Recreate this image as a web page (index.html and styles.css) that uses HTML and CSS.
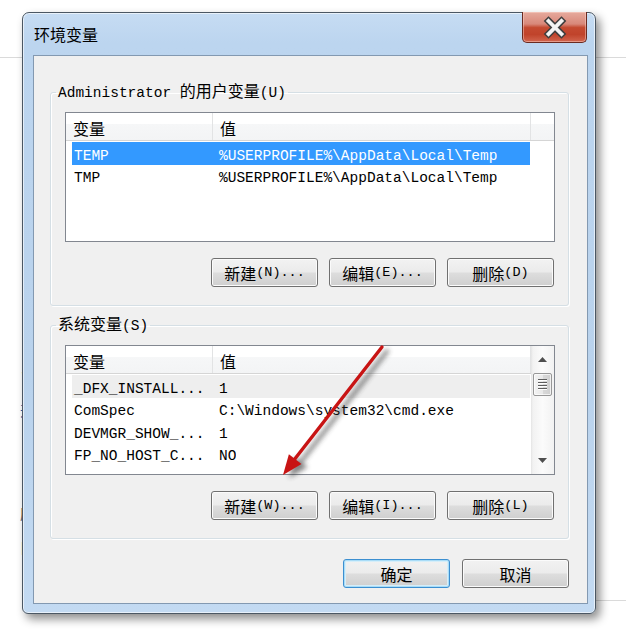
FILE: index.html
```html
<!DOCTYPE html>
<html lang="zh-CN">
<head>
<meta charset="utf-8">
<title>环境变量</title>
<link rel="stylesheet" href="styles.css">
</head>
<body>
<div class="desk">
  <div class="frag">
    <div class="f1">W</div>
    <div class="f2">开</div>
    <div class="f3">.</div>
    <div class="f4">历</div>
    <div class="f5">目</div>
  </div>

  <section class="window">
    <header class="titlebar">
      <span class="title">环境变量</span>
      <div class="close">
        <svg width="65" height="31" viewBox="0 0 65 31">
          <path d="M26.5 9 L39.5 22 M39.5 9 L26.5 22" stroke="#3f3f3f" stroke-width="6.8" stroke-linecap="square"/>
          <path d="M26.5 9 L39.5 22 M39.5 9 L26.5 22" stroke="#f4f4f4" stroke-width="3.8" stroke-linecap="square"/>
        </svg>
      </div>
    </header>
    <div class="frame">
      <div class="client">
        <fieldset class="group g1">
          <legend>Administrator <span class="cj">的用户变量</span>(U)</legend>
          <div class="gbody">
            <div class="list">
              <div class="lmain">
                <div class="lhead">
                  <div class="h1"><span class="cj">变量</span></div>
                  <div class="h2"><span class="cj">值</span></div>
                  <div class="hfill"></div>
                </div>
                <div class="rows">
                  <div class="row sel"><span class="c1">TEMP</span><span class="c2">%USERPROFILE%\AppData\Local\Temp</span></div>
                  <div class="row"><span class="c1">TMP</span><span class="c2">%USERPROFILE%\AppData\Local\Temp</span></div>
                </div>
              </div>
            </div>
            <div class="btns">
              <button class="btn"><span class="cj">新建</span>(N)...</button>
              <button class="btn"><span class="cj">编辑</span>(E)...</button>
              <button class="btn"><span class="cj">删除</span>(D)</button>
            </div>
          </div>
        </fieldset>

        <fieldset class="group g2">
          <legend><span class="cj">系统变量</span>(S)</legend>
          <div class="gbody">
            <div class="list">
              <div class="lmain">
                <div class="lhead">
                  <div class="h1"><span class="cj">变量</span></div>
                  <div class="h2"><span class="cj">值</span></div>
                  <div class="hfill"></div>
                </div>
                <div class="rows">
                  <div class="row dim"><span class="c1">_DFX_INSTALL...</span><span class="c2">1</span></div>
                  <div class="row"><span class="c1">ComSpec</span><span class="c2">C:\Windows\system32\cmd.exe</span></div>
                  <div class="row"><span class="c1">DEVMGR_SHOW_...</span><span class="c2">1</span></div>
                  <div class="row"><span class="c1">FP_NO_HOST_C...</span><span class="c2">NO</span></div>
                </div>
              </div>
              <div class="scroll">
                <div class="sarrow">
                  <svg width="9" height="5" viewBox="0 0 9 5"><path d="M0 5 L4.5 0 L9 5Z" fill="#4f4f4f"/></svg>
                </div>
                <div class="thumb">
                  <svg width="9" height="11" viewBox="0 0 9 11">
                    <path d="M0 1.5h9M0 4.5h9M0 7.5h9M0 10.5h9" stroke="#ffffff" stroke-width="1"/>
                    <path d="M0 .5h9M0 3.5h9M0 6.5h9M0 9.5h9" stroke="#5e5e5e" stroke-width="1"/>
                  </svg>
                </div>
                <div class="strack"></div>
                <div class="sarrow">
                  <svg width="9" height="5" viewBox="0 0 9 5"><path d="M0 0 L4.5 5 L9 0Z" fill="#4f4f4f"/></svg>
                </div>
              </div>
            </div>
            <div class="btns">
              <button class="btn"><span class="cj">新建</span>(W)...</button>
              <button class="btn"><span class="cj">编辑</span>(I)...</button>
              <button class="btn"><span class="cj">删除</span>(L)</button>
            </div>
          </div>
        </fieldset>

        <div class="dlg">
          <button class="btn big def"><span class="cj">确定</span></button>
          <button class="btn big"><span class="cj">取消</span></button>
        </div>
      </div>
    </div>
  </section>

  <svg class="arrow" width="626" height="631" viewBox="0 0 626 631">
    <defs>
      <filter id="sh" x="-30%" y="-30%" width="160%" height="160%">
        <feGaussianBlur stdDeviation="2.4"/>
      </filter>
    </defs>
    <g filter="url(#sh)" opacity="0.6" transform="translate(6 3)">
      <line x1="382" y1="347" x2="294" y2="460" stroke="#333" stroke-width="4"/>
      <polygon points="283,475 301.5,464.1 288.9,454.3" fill="#333"/>
    </g>
    <line x1="382" y1="347" x2="294" y2="460" stroke="#c81414" stroke-width="3.4" stroke-linecap="round"/>
    <polygon points="283,475 301.5,464.1 288.9,454.3" fill="#c81414"/>
  </svg>
</div>
</body>
</html>
```

FILE: styles.css
```css
body {
  margin: 0;
}

.desk {
  position: relative;
  width: 626px;
  height: 631px;
  overflow: hidden;
  background:
    linear-gradient(#dadada, #dadada) 0 57px / 100% 1px no-repeat,
    linear-gradient(#dadada, #dadada) 596px 600px / 30px 1px no-repeat,
    #ffffff;
  font-family: "Liberation Mono", "Noto Sans CJK SC", monospace;
  font-size: 14.5px;
  line-height: 20px;
  color: #000;
}

/* fragments of the page behind the dialog */
.frag {
  width: 34px;
  padding-top: 367px;
  text-align: right;
  color: #2f5fa8;
  font-family: "Noto Sans CJK SC", sans-serif;
  font-size: 14px;
  line-height: 20px;
}
.frag .f1 { color: #1d2f56; }
.frag .f2 { margin-top: 13px; }
.frag .f3 { margin-top: 17px; color: #555; }
.frag .f4 { margin-top: 46px; color: #555; }
.frag .f5 { margin-top: 14px; color: #555; }

.cj {
  font-family: "Noto Sans CJK SC", sans-serif;
  font-size: 16px;
  line-height: 1;
}

/* window */
.window {
  position: absolute;
  left: 22px;
  top: 12px;
  width: 574px;
  height: 602px;
  box-sizing: border-box;
  border: 1px solid #4b5763;
  border-radius: 7px 7px 6px 6px;
  background: linear-gradient(180deg, #c6dcf3 0, #bcd5ef 30px, #b9d2ec 60%, #c3daf2 100%);
  box-shadow: 4px 5px 10px rgba(0, 0, 0, 0.45), inset 0 0 0 1px rgba(255, 255, 255, 0.6);
  display: flex;
  flex-direction: column;
}

.titlebar {
  height: 42px;
  flex: none;
  display: flex;
  align-items: flex-start;
}

.title {
  margin: 11px 0 0 11px;
  font-family: "Noto Sans CJK SC", sans-serif;
  font-size: 16px;
  line-height: 20px;
  color: #000;
}

.close {
  margin: -1px 8px 0 auto;
  width: 65px;
  height: 31px;
  box-sizing: border-box;
  border: 1px solid #6a2a20;
  border-top: none;
  border-radius: 0 0 5px 5px;
  background: linear-gradient(180deg, #e6aa9d 0%, #d8887a 40%, #c44a31 52%, #c0432b 75%, #d2664f 100%);
  box-shadow: inset 0 0 0 1px rgba(255, 220, 210, 0.45);
  position: relative;
}
.close svg {
  position: absolute;
  left: -1px;
  top: 0;
}

.frame {
  flex: 1;
  display: flex;
  padding: 0 7px 9px 10px;
}

.client {
  flex: 1;
  border: 1px solid #8399b1;
  background: #f0f0f0;
  display: flex;
  flex-direction: column;
}

/* group boxes */
.group {
  margin: 0 18px 0 16px;
  padding: 0 0 18px 0;
  border: 1px solid #d5dfe5;
  border-radius: 3px;
  box-shadow: inset 1px 1px 0 #ffffff, 1px 1px 0 #ffffff;
  min-width: 0;
}
.g1 { margin-top: 26px; }
.g2 { margin-top: 9px; }

.group legend {
  height: 20px;
  margin-left: 5px;
  padding: 0 2px;
  line-height: 20px;
  font-size: 14.5px;
  white-space: nowrap;
}

.gbody {
  padding: 10px 13px 0 14px;
}

/* list views */
.list {
  height: 130px;
  box-sizing: border-box;
  border: 1px solid #828790;
  background: #ffffff;
  display: flex;
  overflow: hidden;
}

.lmain {
  flex: 1;
  min-width: 0;
  display: flex;
  flex-direction: column;
}

.lhead {
  height: 28px;
  flex: none;
  box-sizing: border-box;
  display: flex;
  border-bottom: 1px solid #d5d5d5;
  background: linear-gradient(180deg, #ffffff 0, #ffffff 40%, #f6f7f8 40%, #f3f4f5 100%);
}

.h1, .h2 {
  box-sizing: border-box;
  display: flex;
  align-items: center;
  padding: 3px 0 0 7px;
  border-right: 1px solid #e2e3e4;
}
.h1 { width: 147px; flex: none; }
.h2 { width: 318px; flex: none; }
.hfill { flex: 1; }

.rows {
  padding-top: 1px;
}

.row {
  display: flex;
  align-items: center;
  height: 22.5px;
  width: 458px;
  margin-left: 6px;
  padding-top: 5px;
  box-sizing: border-box;
  white-space: nowrap;
}
.row .c1 {
  width: 145px;
  flex: none;
  padding-left: 2px;
  box-sizing: border-box;
  overflow: hidden;
}
.row .c2 {
  padding-left: 2px;
  overflow: hidden;
}
.row.sel {
  background: #3399ff;
  color: #ffffff;
}
.row.dim {
  background: #eeeeee;
}

/* scrollbar */
.scroll {
  width: 23px;
  flex: none;
  display: flex;
  flex-direction: column;
  background: linear-gradient(90deg, #e4e4e4 0, #f2f2f2 2px, #fbfbfb 50%, #f2f2f2 100%);
}
.sarrow {
  height: 27px;
  flex: none;
  display: flex;
  align-items: center;
  justify-content: center;
}
.thumb {
  height: 23px;
  flex: none;
  margin: 0 2px;
  box-sizing: border-box;
  border: 1px solid #989898;
  border-radius: 2px;
  background: linear-gradient(90deg, #f3f3f3 0, #e9e9e9 50%, #d9d9d9 50%, #d0d0d0 100%);
  box-shadow: inset 0 0 0 1px rgba(255, 255, 255, 0.7);
  display: flex;
  align-items: center;
  justify-content: center;
}
.strack { flex: 1; }

/* buttons */
.btns {
  display: flex;
  justify-content: flex-end;
  gap: 11px;
  margin-top: 16px;
  padding-right: 1px;
}

.btn {
  width: 107px;
  height: 29px;
  box-sizing: border-box;
  padding: 0;
  border: 1px solid #707070;
  border-radius: 3px;
  background: linear-gradient(180deg, #f2f2f2 0, #ebebeb 48%, #dddddd 52%, #cfcfcf 100%);
  box-shadow: inset 0 0 0 1px #fbfbfb;
  font-family: "Liberation Mono", "Noto Sans CJK SC", monospace;
  font-size: 13.5px;
  line-height: 20px;
  color: #000;
  display: flex;
  align-items: center;
  justify-content: center;
  white-space: nowrap;
}

.btn.def {
  border-color: #3c8fd0;
  box-shadow: inset 0 0 0 1px #a9dcf7, inset 0 0 0 2px #d6eef9;
}

.dlg {
  display: flex;
  justify-content: flex-end;
  gap: 12px;
  margin: 20px 18px 0 0;
}

.arrow {
  position: absolute;
  left: 0;
  top: 0;
  pointer-events: none;
}
```
